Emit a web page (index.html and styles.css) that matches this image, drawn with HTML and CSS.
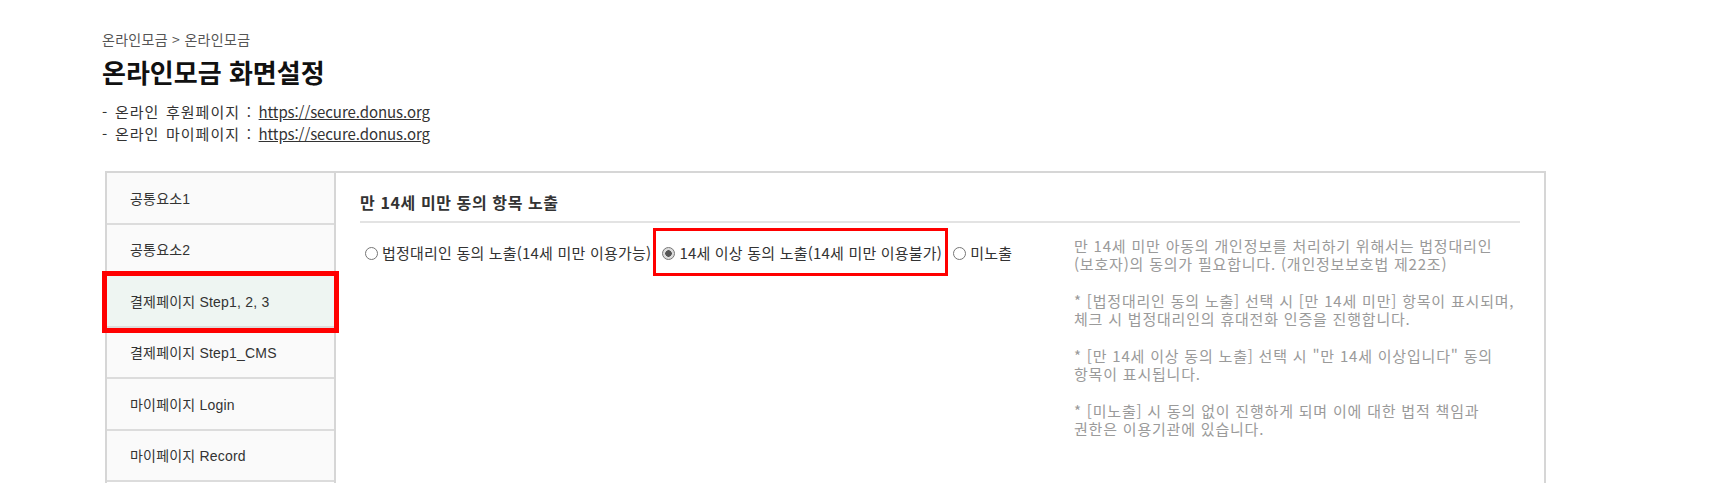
FILE: index.html
```html
<!DOCTYPE html>
<html lang="ko">
<head>
    <meta charset="UTF-8">
    <meta name="viewport" content="width=device-width, initial-scale=1.0">
    <title>온라인모금 화면설정</title>
    <link rel="stylesheet" href="styles.css">
</head>
<body>

<div class="page">
    <div class="breadcrumb">온라인모금 &gt; 온라인모금</div>
    <h1 class="page-title">온라인모금 화면설정</h1>
    <ul class="site-links">
        <li><span class="link-label">- 온라인 후원페이지 : </span><a href="#">https://secure.donus.org</a></li>
        <li><span class="link-label">- 온라인 마이페이지 : </span><a href="#">https://secure.donus.org</a></li>
    </ul>

    <div class="settings">
        <ul class="side-menu">
            <li class="menu-item">공통요소1</li>
            <li class="menu-item">공통요소2</li>
            <li class="menu-item active">결제페이지 Step1, 2, 3</li>
            <li class="menu-item">결제페이지 Step1_CMS</li>
            <li class="menu-item">마이페이지 Login</li>
            <li class="menu-item">마이페이지 Record</li>
        </ul>

        <div class="panel">
            <h2 class="panel-title">만 14세 미만 동의 항목 노출</h2>
            <div class="option-row">
                <div class="options">
                    <label class="option"><input type="radio" name="age14">법정대리인 동의 노출(14세 미만 이용가능)</label>
                    <label class="option marked"><input type="radio" name="age14" checked>14세 이상 동의 노출(14세 미만 이용불가)</label>
                    <label class="option"><input type="radio" name="age14">미노출</label>
                </div>
                <p class="help">
                    만 14세 미만 아동의 개인정보를 처리하기 위해서는 법정대리인<br>
                    (보호자)의 동의가 필요합니다. (개인정보보호법 제22조)<br>
                    <br>
                    * [법정대리인 동의 노출] 선택 시 [만 14세 미만] 항목이 표시되며,<br>
                    체크 시 법정대리인의 휴대전화 인증을 진행합니다.<br>
                    <br>
                    * [만 14세 이상 동의 노출] 선택 시 "만 14세 이상입니다" 동의<br>
                    항목이 표시됩니다.<br>
                    <br>
                    * [미노출] 시 동의 없이 진행하게 되며 이에 대한 법적 책임과<br>
                    권한은 이용기관에 있습니다.
                </p>
            </div>
        </div>
    </div>
</div>

</body>
</html>
```

FILE: styles.css
```css
body {
    margin: 0;
    padding: 0;
    background-color: #fff;
    color: #333;
    font-family: "Noto Sans CJK KR", sans-serif;
    font-size: 15px;
}

.page {
    padding: 30px 0 0 102px;
}

.breadcrumb {
    font-size: 14px;
    line-height: 18px;
    letter-spacing: 0.3px;
    color: #555;
}

.page-title {
    margin: 7px 0 0;
    font-size: 26px;
    line-height: 34px;
    font-weight: bold;
    color: #111;
}

.site-links {
    list-style: none;
    margin: 12px 0 0;
    padding: 0;
    line-height: 22px;
}

.link-label {
    letter-spacing: 1px;
    word-spacing: 1.5px;
}

.site-links a {
    color: #333;
    text-decoration: underline;
    letter-spacing: -0.1px;
}

.settings {
    display: flex;
    width: 1437px;
    margin: 26px 0 0 3px;
    border: 2px solid #d6d6d6;
}

.side-menu {
    list-style: none;
    margin: 0;
    padding: 0;
    width: 227px;
    flex: 0 0 227px;
    border-right: 2px solid #d6d6d6;
    font-family: "Liberation Sans", "Noto Sans CJK KR", sans-serif;
    font-size: 14px;
}

.menu-item {
    display: flex;
    align-items: center;
    box-sizing: border-box;
    height: 51.5px;
    padding-left: 23px;
    background-color: #fafafa;
    border-bottom: 2px solid #dcdcdc;
    color: #333;
    letter-spacing: 0.2px;
}

.menu-item.active {
    background-color: #eef5f2;
    outline: 5px solid #f00;
}

.panel {
    flex: 1;
    padding: 19px 24px 60px 24px;
}

.panel-title {
    margin: 0;
    padding-bottom: 9px;
    border-bottom: 2px solid #e3e3e3;
    font-size: 16px;
    line-height: 20px;
    letter-spacing: 0.6px;
    font-weight: bold;
    color: #333;
}

.option-row {
    display: flex;
    margin-top: 14px;
}

.options {
    flex: 0 0 714px;
    padding-top: 6px;
    line-height: 20px;
}

.option {
    position: relative;
    display: inline-flex;
    align-items: center;
    margin-right: 2px;
    color: #333;
    letter-spacing: 0.2px;
    cursor: pointer;
}

.option input {
    appearance: none;
    -webkit-appearance: none;
    box-sizing: border-box;
    width: 13px;
    height: 13px;
    margin: 0 4px 0 5px;
    border: 1px solid #767676;
    border-radius: 50%;
    background: #fff;
}

.option input:checked {
    background: radial-gradient(circle, #555 0 3px, #dcdcdc 3.5px);
}

.option.marked::after {
    content: "";
    position: absolute;
    top: -15px;
    bottom: -13px;
    left: -4px;
    right: -6px;
    border: 3px solid #f00;
    pointer-events: none;
}

.help {
    margin: 0;
    font-size: 15px;
    line-height: 18.3px;
    letter-spacing: 0.8px;
    color: #9a9a9a;
}
```
